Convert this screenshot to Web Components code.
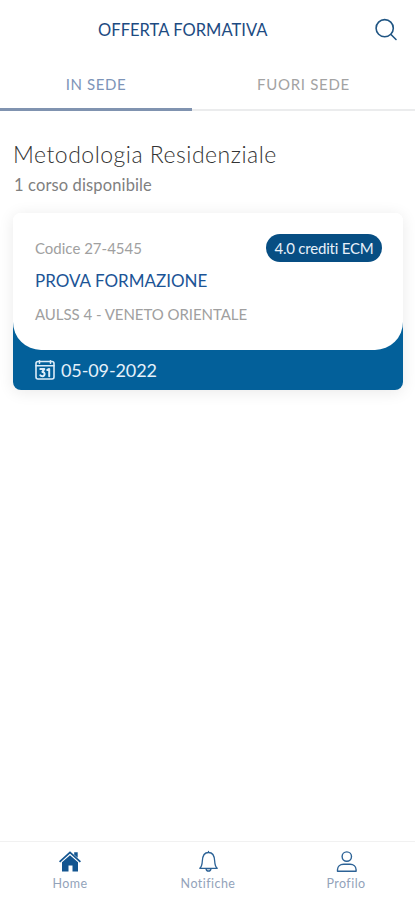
<!DOCTYPE html>
<html lang="it">
<head>
<meta charset="utf-8">
<title>Offerta formativa</title>
<style>
    html, body{margin:0;height:100%;}
    body{background:#fff;font-family:Lato, "Open Sans", sans-serif;}
</style>
</head>
<body>
<ecm-app>
    <ecm-header slot="top">OFFERTA FORMATIVA</ecm-header>
    <ecm-tabs slot="top">
        <span slot="sede">IN SEDE</span>
        <span slot="fuori">FUORI SEDE</span>
    </ecm-tabs>
    <ecm-section>
        <span slot="titolo">Metodologia Residenziale</span>
        <span slot="conta">1 corso disponibile</span>
        <ecm-corso>
            <span slot="codice">Codice 27-4545</span>
            <span slot="crediti">4.0 crediti ECM</span>
            <span slot="nome">PROVA FORMAZIONE</span>
            <span slot="ente">AULSS 4 - VENETO ORIENTALE</span>
            <span slot="data">05-09-2022</span>
        </ecm-corso>
    </ecm-section>
    <ecm-nav slot="bottom"></ecm-nav>
</ecm-app>

<script>
function crea(html) {
    const t = document.createElement('template');
    t.innerHTML = html;
    return t;
}

class EcmBase extends HTMLElement {
    constructor() {
        super();
        this.attachShadow({ mode: 'open' });
        this.shadowRoot.appendChild(this.constructor.template.content.cloneNode(true));
    }
}

class EcmApp extends EcmBase {
    static template = crea(`
        <style>
            :host{display:flex;flex-direction:column;height:100vh;overflow:hidden;}
            main{flex:1;min-height:0;}
        </style>
        <slot name="top"></slot>
        <main><slot></slot></main>
        <slot name="bottom"></slot>
    `);
}

class EcmHeader extends EcmBase {
    static template = crea(`
        <style>
            :host{display:flex;align-items:center;height:59px;box-sizing:border-box;padding:0 17px 0 98px;color:#1d4b82;}
            .titolo{flex:1;font-size:16.5px;line-height:20px;letter-spacing:0.05px;white-space:nowrap;}
            svg{display:block;width:24px;height:24px;}
        </style>
        <div class="titolo"><slot></slot></div>
        <svg viewBox="0 0 24 24" fill="none" stroke="#205583" stroke-width="1.6" stroke-linecap="round">
            <circle cx="10.7" cy="10.2" r="8.6"/>
            <path d="M17 16.5l5 5"/>
        </svg>
    `);
}

class EcmTabs extends EcmBase {
    static template = crea(`
        <style>
            :host{display:grid;grid-template-columns:192px 1fr;height:52px;font-size:15px;line-height:20px;color:#a3a3a3;}
            div{box-sizing:border-box;padding-top:15px;text-align:center;border-bottom:2px solid #ebeced;}
            .attivo{color:#7d94b8;border-bottom:3px solid #8093b0;}
            .sede{letter-spacing:0.6px;}
            .fuori{letter-spacing:0.7px;}
        </style>
        <div class="attivo sede"><slot name="sede"></slot></div>
        <div class="fuori"><slot name="fuori"></slot></div>
    `);
}

class EcmSection extends EcmBase {
    static template = crea(`
        <style>
            :host{display:block;padding:28px 12px 0 13px;}
            h2{margin:0;font-size:23px;line-height:30px;font-weight:300;letter-spacing:0.5px;color:#333;}
            p{margin:5px 0 17px 1px;font-size:16.5px;line-height:22px;letter-spacing:0.13px;color:#808080;}
        </style>
        <h2><slot name="titolo"></slot></h2>
        <p><slot name="conta"></slot></p>
        <slot></slot>
    `);
}

class EcmCorso extends EcmBase {
    static template = crea(`
        <style>
            /* the blue starts below the top corners, so it can't bleed around them */
            :host{display:block;height:177px;border-radius:8px;overflow:hidden;background:linear-gradient(#fff 60px, #03609a 60px);box-shadow:0 2px 16px rgba(0,0,0,0.09);}
            .corpo{height:137px;box-sizing:border-box;padding:21px 21px 0 22px;background:#fff;border-radius:0 0 28px 28px;}
            .riga{display:flex;justify-content:space-between;align-items:center;height:28px;}
            .codice,.ente{font-size:15px;line-height:20px;color:#a0a0a0;}
            .badge{display:flex;align-items:center;justify-content:center;width:116px;height:28px;border-radius:14px;background:#074e83;color:#e8f1fa;font-size:15px;letter-spacing:-0.2px;white-space:nowrap;}
            .nome{margin-top:8px;font-size:17px;line-height:22px;color:#1b5496;}
            .ente{margin-top:12px;letter-spacing:-0.05px;}
            .piede{display:flex;align-items:center;gap:6px;height:40px;padding-left:22px;color:#e5f1fb;font-size:18px;letter-spacing:-0.1px;}
            svg{display:block;width:20px;height:20px;}
        </style>
        <div class="corpo">
            <div class="riga">
                <div class="codice"><slot name="codice"></slot></div>
                <div class="badge"><slot name="crediti"></slot></div>
            </div>
            <div class="nome"><slot name="nome"></slot></div>
            <div class="ente"><slot name="ente"></slot></div>
        </div>
        <div class="piede">
            <svg viewBox="0 0 20 20" fill="none" stroke="#dcecf8" stroke-width="1.6" stroke-linecap="round" stroke-linejoin="round">
                <rect x="1" y="1.5" width="18" height="17.5" rx="2"/>
                <path d="M1 5.8h18M4.5 .8v2.4M15.5 .8v2.4"/>
                <path stroke-width="2" d="M5.3 9h4L7.4 11.900c3 0 2.800 4.300 0 4.300-1 0-1.700-.3-2.100-.9M12.300 10l1.900-1v7.200"/>
            </svg>
            <span class="data"><slot name="data"></slot></span>
        </div>
    `);
}

class EcmNav extends EcmBase {
    static template = crea(`
        <style>
            :host{display:grid;grid-template-columns:repeat(3,1fr);height:59px;box-sizing:border-box;padding-left:1px;border-top:1px solid #f1f1f1;font-size:12.5px;line-height:16px;color:#93a3ba;}
            a{display:flex;flex-direction:column;align-items:center;padding-top:7px;letter-spacing:0.45px;}
            svg{display:block;width:24px;height:24px;margin-bottom:3px;}
        </style>
        <a>
            <svg viewBox="0 0 24 24" fill="#135590">
                <path d="M4 13.300L12 6.300l8 7V22.500h-5.500v-6h-4v6H4z"/>
                <path d="M16.200 3.300h3.500v5.500l-3.500-3z"/>
                <path d="M1.600 12.800L12 3.400l10.400 9.400" fill="none" stroke="#135590" stroke-width="1.800"/>
            </svg>
            <span>Home</span>
        </a>
        <a>
            <svg viewBox="0 0 24 24" fill="none" stroke="#2c6296" stroke-width="1.300" stroke-linejoin="round" stroke-linecap="round">
                <path d="M12.500 3.300v-.8M3.800 19.300c1.700-1.400 2.300-3 2.500-7 .2-5.800 2.400-8.800 6.200-8.800s6 3 6.200 8.800c.2 4 .8 5.600 2.500 7z"/>
                <path d="M10 19.600c.3 3.400 4.700 3.400 5 0" fill="#2c6296" fill-opacity=".35"/>
            </svg>
            <span>Notifiche</span>
        </a>
        <a>
            <svg viewBox="0 0 24 24" fill="none" stroke="#2c6296" stroke-width="1.400" stroke-linejoin="round">
                <circle cx="12.800" cy="7.600" r="4.700"/>
                <path d="M3.500 22.300v-1.500c0-3.500 2.700-5.500 6-5.500h6.600c3.300 0 6 2 6 5.500v1.500z"/>
            </svg>
            <span>Profilo</span>
        </a>
    `);
}

window.customElements.define('ecm-app', EcmApp);
window.customElements.define('ecm-header', EcmHeader);
window.customElements.define('ecm-tabs', EcmTabs);
window.customElements.define('ecm-section', EcmSection);
window.customElements.define('ecm-corso', EcmCorso);
window.customElements.define('ecm-nav', EcmNav);
</script>
</body>
</html>
